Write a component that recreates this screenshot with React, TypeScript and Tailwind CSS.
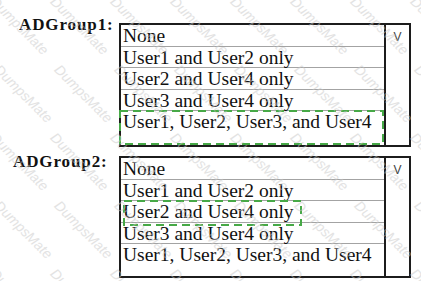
import React from 'react';

const OPTIONS = [
  'None',
  'User1 and User2 only',
  'User2 and User4 only',
  'User3 and User4 only',
  'User1, User2, User3, and User4',
];

interface Dash {
  left: number;
  top: number;
  width: number;
  height: number;
}

function DashedMark({ left, top, width, height }: Dash) {
  return (
    <svg
      className="absolute pointer-events-none"
      style={{ left, top, width, height }}
      width={width}
      height={height}
    >
      <rect
        x={1}
        y={1}
        width={width - 2}
        height={height - 2}
        fill="none"
        stroke="#47a947"
        strokeWidth={2}
        strokeDasharray="8 5"
      />
    </svg>
  );
}

function ListBox({ lastHeight, dash }: { lastHeight: string; dash: Dash }) {
  return (
    <div className="relative flex w-[292px] border-2 border-[#1c1c1c] bg-white">
      <div className="flex w-[263px] flex-col">
        {OPTIONS.map((opt, i) => (
          <div
            key={opt}
            className={
              i < OPTIONS.length - 1
                ? 'h-[21.5px] border-b border-[#a3a3a3] pl-[2px] leading-[21.5px] whitespace-nowrap'
                : `${lastHeight} pl-[2px] leading-[21.5px] whitespace-nowrap`
            }
          >
            {opt}
          </div>
        ))}
      </div>
      <div className="flex w-[25px] justify-center border-l-2 border-[#1c1c1c] pt-[6px]">
        <span className="font-['Liberation_Sans',Arial,sans-serif] text-[12px] leading-none text-[#444]">
          V
        </span>
      </div>
      <DashedMark {...dash} />
    </div>
  );
}

function Watermarks() {
  const marks: { x: number; y: number }[] = [];
  for (let r = 0; r < 5; r++) {
    for (let c = 0; c < 8; c++) {
      marks.push({ x: -2 + c * 60 + (r % 2) * 4, y: -6 + r * 68 });
    }
  }
  return (
    <div className="pointer-events-none absolute inset-0 overflow-hidden">
      {marks.map((m, i) => (
        <span
          key={i}
          className="absolute origin-top-left rotate-45 font-['Liberation_Sans',Arial,sans-serif] text-[14px] italic leading-none text-[#c8c8c8] opacity-50 whitespace-nowrap"
          style={{ left: m.x, top: m.y }}
        >
          DumpsMate
        </span>
      ))}
    </div>
  );
}

export default function App() {
  return (
    <div className="relative h-[281px] w-[421px] overflow-hidden bg-white font-['Liberation_Serif','Times_New_Roman',serif] text-[19.5px] text-[#111]">
      <div className="flex flex-col pt-[16px]">
        <div className="flex items-start">
          <div className="w-[119px] pl-[19px] text-[17px] font-bold leading-none tracking-[0.9px]">
            ADGroup1:
          </div>
          <div className="mt-[7px]">
            <ListBox
              lastHeight="h-[34px]"
              dash={{ left: -2, top: 85, width: 265, height: 35 }}
            />
          </div>
        </div>
        <div className="mt-[6px] flex items-start">
          <div className="w-[119px] pl-[13px] text-[17px] font-bold leading-none tracking-[0.9px]">
            ADGroup2:
          </div>
          <div className="mt-[3px]">
            <ListBox
              lastHeight="h-[32px]"
              dash={{ left: 2, top: 42, width: 179, height: 26 }}
            />
          </div>
        </div>
      </div>
      <Watermarks />
    </div>
  );
}
